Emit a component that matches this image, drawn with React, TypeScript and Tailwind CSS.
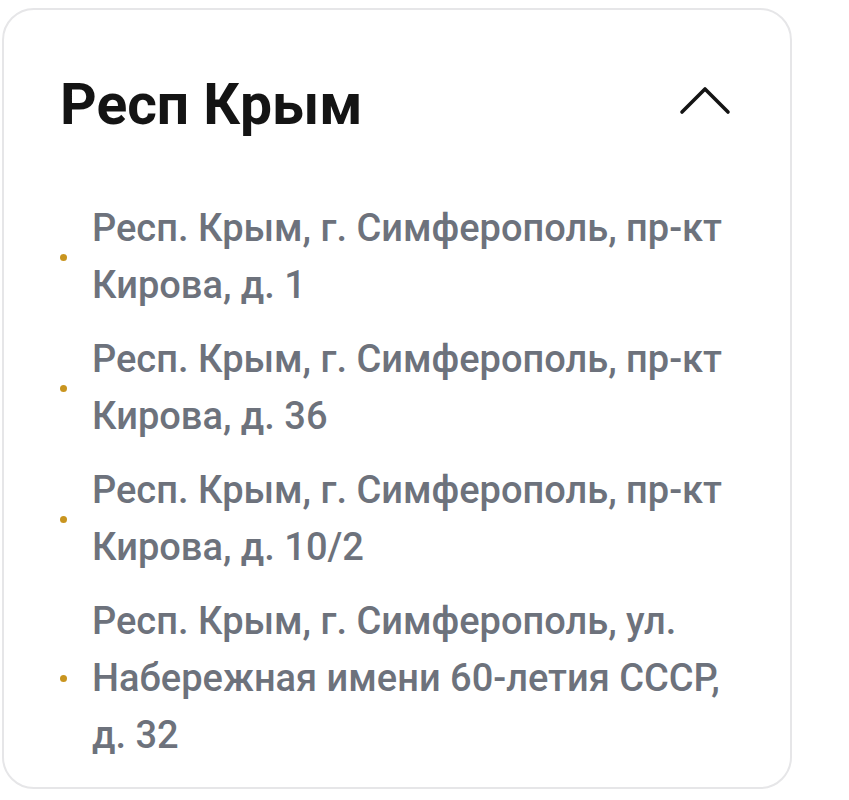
import { useState } from 'react';

const addresses = [
    'Респ. Крым, г. Симферополь, пр-кт Кирова, д. 1',
    'Респ. Крым, г. Симферополь, пр-кт Кирова, д. 36',
    'Респ. Крым, г. Симферополь, пр-кт Кирова, д. 10/2',
    'Респ. Крым, г. Симферополь, ул. Набережная имени 60-летия СССР, д. 32',
];

export default function App() {
    const [open, setOpen] = useState(true);

    return (
        <div className="min-h-[800px] w-[849px] bg-white pt-[8px] pl-[2px]" style={{ fontFamily: 'Roboto, "Noto Sans", sans-serif' }}>
            <div className="w-[790px] h-[781px] rounded-[32px] border-2 border-[#e6e6e8] bg-white px-[56px] pt-[63px]">
                {/* Header */}
                <button
                    onClick={() => setOpen(!open)}
                    className="w-full flex items-center justify-between h-[64px]"
                >
                    <span className="text-[57px] font-bold leading-[64px] text-[#141414]">Респ Крым</span>
                    <svg width="52" height="30" viewBox="0 0 52 30" className="mr-[3px] mt-[-8px]">
                        <path d="M3 26 L26 3 L49 26" fill="none" stroke="#141414" strokeWidth="3.6" strokeLinecap="round" strokeLinejoin="round" />
                    </svg>
                </button>

                {open && (
                    <ul className="mt-[63px] flex flex-col gap-[17px]">
                        {addresses.map((a, i) => (
                            <li key={i} className="flex items-center gap-[25px]">
                                <span className="w-[7px] h-[7px] rounded-full bg-[#c9951f] shrink-0" />
                                <span className="text-[38px] font-medium leading-[57px] text-[#6d727c] w-[640px]">{a}</span>
                            </li>
                        ))}
                    </ul>
                )}
            </div>
        </div>
    );
}
